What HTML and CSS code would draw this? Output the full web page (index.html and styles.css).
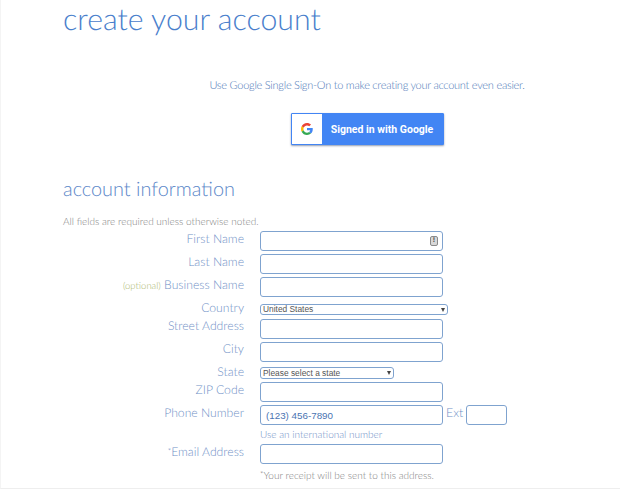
FILE: index.html
```html
<!DOCTYPE html>
<html lang="en">
<head>
<meta charset="utf-8">
<title>Create your account</title>
<link rel="stylesheet" href="styles.css">
</head>
<body>
<main class="page">
  <h1 class="title">create your account</h1>
  <section class="sso">
    <p class="sso-text">Use Google Single Sign-On to make creating your account even easier.</p>
    <button class="google" type="button">
      <span class="google-icon">
        <svg width="12" height="12" viewBox="0 0 48 48" aria-hidden="true">
          <path fill="#EA4335" d="M24 9.500c3.500 0 6.700 1.200 9.200 3.600l6.900-6.900C35.900 2.400 30.500 0 24 0 14.600 0 6.500 5.400 2.600 13.200l8 6.200C12.500 13.700 17.800 9.500 24 9.500z"/>
          <path fill="#4285F4" d="M47 24.500c0-1.600-.1-3.100-.4-4.500H24v9h13c-.6 3-2.200 5.500-4.800 7.200l7.700 6C44.400 37.900 47 31.800 47 24.500z"/>
          <path fill="#FBBC05" d="M10.600 28.600c-.5-1.400-.8-3-.8-4.600s.3-3.200.8-4.600l-8-6.200C.9 16.500 0 20.100 0 24s.9 7.500 2.600 10.800l8-6.200z"/>
          <path fill="#34A853" d="M24 48c6.500 0 11.900-2.100 15.900-5.800l-7.700-6c-2.200 1.400-4.900 2.300-8.200 2.300-6.200 0-11.500-4.200-13.400-9.900l-8 6.200C6.500 42.600 14.600 48 24 48z"/>
        </svg>
      </span>
      <span class="google-label">Signed in with Google</span>
    </button>
  </section>
  <h2 class="subtitle">account information</h2>
  <p class="required">All fields are required unless otherwise noted.</p>
  <form class="form">
    <div class="row">
      <label class="label">First Name</label>
      <div class="field"><input class="input" type="text"><span class="badge">!</span></div>
    </div>
    <div class="row">
      <label class="label">Last Name</label>
      <div class="field"><input class="input" type="text"></div>
    </div>
    <div class="row">
      <label class="label"><span class="optional">(optional)</span> Business Name</label>
      <div class="field"><input class="input" type="text"></div>
    </div>
    <div class="row row-country">
      <label class="label">Country</label>
      <div class="field select-wrap"><select class="select select-country"><option>United States</option></select></div>
    </div>
    <div class="row row-raised">
      <label class="label">Street Address</label>
      <div class="field"><input class="input" type="text"></div>
    </div>
    <div class="row row-raised">
      <label class="label">City</label>
      <div class="field"><input class="input" type="text"></div>
    </div>
    <div class="row row-state">
      <label class="label">State</label>
      <div class="field select-wrap"><select class="select select-state"><option>Please select a state</option></select></div>
    </div>
    <div class="row">
      <label class="label">ZIP Code</label>
      <div class="field"><input class="input" type="text"></div>
    </div>
    <div class="row">
      <label class="label">Phone Number</label>
      <div class="field">
        <input class="input input-phone" type="text" value="(123) 456-7890">
        <span class="ext-label">Ext</span>
        <input class="input input-ext" type="text">
      </div>
    </div>
    <a class="hint hint-link">Use an international number</a>
    <div class="row row-raised">
      <label class="label"><span class="mark">*</span>Email Address</label>
      <div class="field"><input class="input" type="text"></div>
    </div>
    <p class="hint hint-note"><span class="mark">*</span>Your receipt will be sent to this address.</p>
  </form>
</main>
</body>
</html>
```
FILE: styles.css
```css
* { box-sizing: border-box; }
html, body { margin: 0; padding: 0; height: 100%; overflow: hidden; background: #fff; }
body { font-family: Lato, "Open Sans", sans-serif; font-weight: 300; color: #4b7cc3; text-rendering: geometricPrecision; }
.page { height: 489px; padding: 0 0 0 62px; border-left: 1px solid #f4f4f4; border-bottom: 1px solid #eeeeee; overflow: hidden; }
.title { margin: 0; height: 40px; font-size: 30.300px; line-height: 38px; font-weight: 300; color: #4a80cc; white-space: nowrap; }
.sso { display: flex; flex-direction: column; align-items: center; width: 316px; margin-left: 146px; padding-top: 38px; }
.sso-text { margin: 0; font-size: 11px; line-height: 16px; letter-spacing: -.25px; color: #4a76b6; white-space: nowrap; }
.google { display: flex; align-items: stretch; width: 153px; height: 32px; margin-top: 19px; padding: 0; border: 1px solid #4285f4; border-radius: 1px; background: #4285f4; box-shadow: 0 1px 2px rgba(40, 60, 100, .5); font-family: Roboto, sans-serif; }
.google-icon { display: flex; align-items: center; justify-content: center; width: 30px; background: #fff; }
.google-label { flex: 1; align-self: center; color: #fff; font-size: 10.500px; font-weight: 700; text-align: center; white-space: nowrap; }
.subtitle { margin: 31px 0 0; font-size: 19.900px; line-height: 26px; font-weight: 300; color: #5d88c9; white-space: nowrap; }
.required { margin: 14px 0 0; font-size: 10px; line-height: 13px; color: #808080; white-space: nowrap; }
.form { margin: 2px 0 0 -62px; }
.row { display: flex; align-items: flex-start; height: 20px; margin-bottom: 3px; }
.label { flex: 0 0 243px; text-align: right; font-size: 12.200px; line-height: 16px; color: #6f90c6; white-space: nowrap; }
.row-raised .label { margin-top: -1px; }
.mark { font-size: 8px; vertical-align: 2px; }
.optional { font-size: 9.500px; color: #a9b56b; }
.field { margin-left: 16px; display: flex; align-items: flex-start; position: relative; }
.input { display: block; width: 183px; height: 20px; padding: 0 5px; border: 1px solid #7fa3cf; border-radius: 3px; background: #fff; font-family: "Liberation Sans", sans-serif; font-size: 9.800px; color: #4a74b2; outline: none; }
.badge { position: absolute; right: 5px; top: 5px; width: 8px; height: 10px; border: 1px solid #8a8a8a; border-radius: 2px; background: #d8d8d8; color: #444; font: 700 7px/8px "Liberation Sans", sans-serif; text-align: center; }
.select { display: block; appearance: none; height: 11px; padding: 0 2px; border: 1px solid #7fa3cf; border-radius: 3px; background: #fff; font-family: "Liberation Sans", sans-serif; font-size: 8.400px; line-height: 9px; color: #555; outline: none; }
.select-wrap::after { content: ""; position: absolute; right: 3px; top: 4px; border-left: 2.500px solid transparent; border-right: 2.500px solid transparent; border-top: 4px solid #444; pointer-events: none; }
.select-country { width: 188px; }
.select-state { width: 134px; height: 12px; }
.row-country { height: 11px; margin-top: 7px; margin-bottom: 4px; }
.row-country .label { margin-top: -4px; }
.row-state { height: 12px; margin-top: 5px; margin-bottom: 3px; }
.row-state .label { margin-top: -3px; }
.ext-label { margin-left: 3px; font-size: 12.400px; line-height: 16px; color: #6f90c6; }
.input-ext { width: 41px; margin-left: 3px; }
.hint { display: block; margin: 0 0 0 259px; padding-top: 1px; font-size: 10px; line-height: 13px; white-space: nowrap; }
.hint-link { color: #6f90c6; height: 16px; }
.hint-note { color: #808080; }
```
